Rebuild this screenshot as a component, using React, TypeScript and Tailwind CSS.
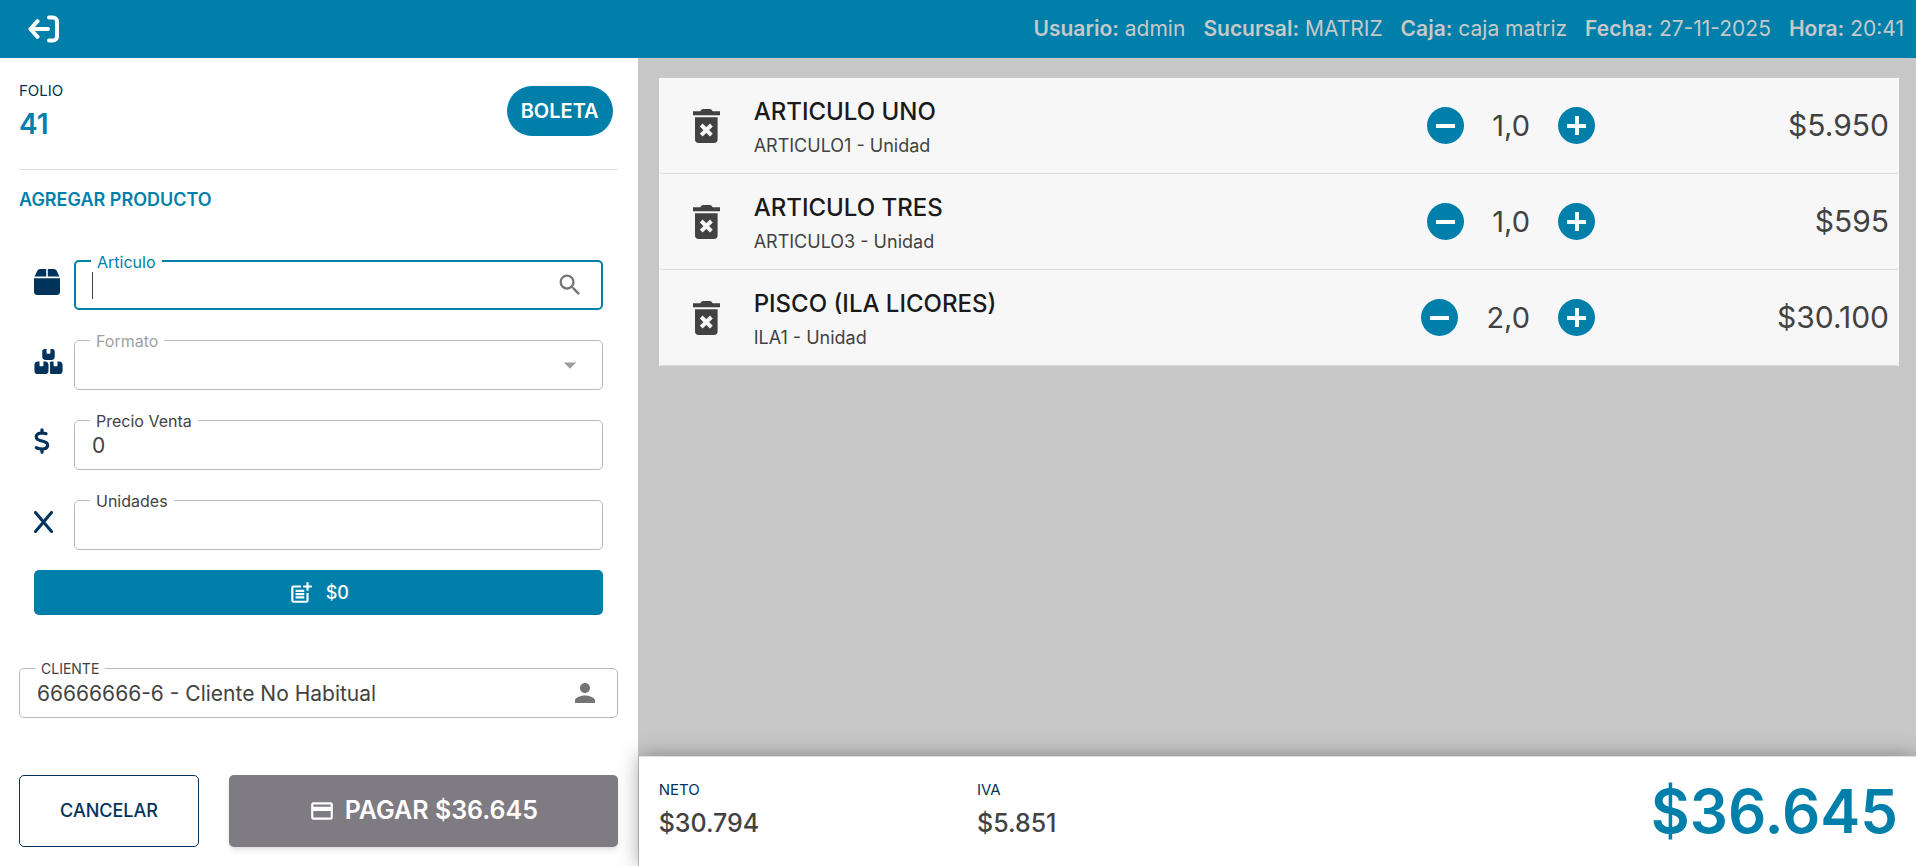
import {
  MdOutlineCreditCard,
  MdOutlinePostAdd,
  MdPerson,
  MdSearch,
  MdArrowDropDown,
} from 'react-icons/md';
import { FaBoxesStacked, FaDollarSign } from 'react-icons/fa6';

interface CartItem {
  name: string;
  code: string;
  qty: string;
  total: string;
}

const items: CartItem[] = [
  { name: 'ARTICULO UNO', code: 'ARTICULO1 - Unidad', qty: '1,0', total: '$5.950' },
  { name: 'ARTICULO TRES', code: 'ARTICULO3 - Unidad', qty: '1,0', total: '$595' },
  { name: 'PISCO (ILA LICORES)', code: 'ILA1 - Unidad', qty: '2,0', total: '$30.100' },
];

const session = [
  { label: 'Usuario:', value: 'admin' },
  { label: 'Sucursal:', value: 'MATRIZ' },
  { label: 'Caja:', value: 'caja matriz' },
  { label: 'Fecha:', value: '27-11-2025' },
  { label: 'Hora:', value: '20:41' },
];

function ExitIcon() {
  return (
    <svg viewBox="0 0 31 28" className="h-7 w-[31px]" fill="none" stroke="currentColor" strokeWidth="4" strokeLinecap="round" strokeLinejoin="round">
      <path d="M21 2.5h4a4 4 0 0 1 4 4v15a4 4 0 0 1-4 4h-4" />
      <path d="M20 14H2.500M9.500 6.200 2.500 14l7 7.800" />
    </svg>
  );
}

function BoxIcon() {
  return (
    <svg viewBox="0 0 26 26" className="h-[26px] w-[26px]" fill="currentColor">
      <path d="M12.2 0v7.600H.6L3.300 1.700A3 3 0 0 1 6 0zM13.800 0H20a3 3 0 0 1 2.700 1.700l2.700 5.900H13.800zM0 9.200h26V22.500a3.500 3.500 0 0 1-3.500 3.500h-19A3.500 3.500 0 0 1 0 22.500z" />
    </svg>
  );
}

function TimesIcon() {
  return (
    <svg viewBox="0 0 20 22" className="h-[22px] w-5" fill="none" stroke="currentColor" strokeWidth="3" strokeLinecap="round">
      <path d="M1.500 1.500l16 19M17.500 1.500l-16 19" />
    </svg>
  );
}

function TrashIcon() {
  return (
    <svg viewBox="0 0 27 34" className="h-[34px] w-[27px]">
      <path fill="currentColor" d="M0 2.200h7.500C8 .8 9 0 10.500 0h6C18 0 19 .8 19.500 2.200H27v4H0zM2 8.200h22.600v22a3.800 3.800 0 0 1-3.800 3.800h-15A3.800 3.800 0 0 1 2 30.200z" />
      <path stroke="#f7f7f7" strokeWidth="4" d="M8.200 16l10.200 10.200M18.400 16L8.200 26.200" />
    </svg>
  );
}

interface FieldProps {
  id: string;
  label: string;
  tone?: 'active' | 'disabled' | 'normal';
  small?: boolean;
  children: React.ReactNode;
}

function Field({ id, label, tone = 'normal', small = false, children }: FieldProps) {
  const border = tone === 'active' ? 'border-2 border-[#007faa]' : 'border border-[#b9b9b9]';
  const text = tone === 'active' ? 'text-[#007faa]' : tone === 'disabled' ? 'text-[#a0a0a0]' : 'text-[#424242]';
  const size = small ? 'text-sm' : 'text-base';
  return (
    <div className={`relative flex h-[50px] min-w-0 flex-1 items-center rounded-[5px] bg-white ${border}`}>
      <label htmlFor={id} className={`absolute -top-[10px] left-[15px] flex h-5 items-center bg-white px-[6px] ${size} ${text}`}>
        {label}
      </label>
      {children}
    </div>
  );
}

export default function App() {
  return (
    <div className="flex min-h-screen flex-col bg-[#c7c7c7] font-[Inter,sans-serif] text-[#424242]">
      {/* Barra superior */}
      <header className="flex h-[58px] items-center justify-between bg-[#007faa] pr-3 pl-7 text-[21px]">
        <button aria-label="Salir" className="text-white">
          <ExitIcon />
        </button>
        <div className="flex gap-[18px] text-[#c8c8c8]">
          {session.map((s) => (
            <span key={s.label}>
              <strong className="font-semibold">{s.label}</strong> {s.value}
            </span>
          ))}
        </div>
      </header>

      <div className="grid flex-1 grid-cols-3">
        {/* Panel de venta */}
        <aside className="flex flex-col border-r border-[#c7c7c7] bg-white pr-5 pb-[19px] pl-[19px]">
          <div className="flex h-[112px] items-start justify-between border-b border-[#dedede] pt-[21px] pr-[5px]">
            <div>
              <div className="text-[15px] leading-6 text-[#00335b]">FOLIO</div>
              <div className="text-[28px] leading-[42px] font-semibold text-[#007faa]">41</div>
            </div>
            <button className="mt-[7px] h-[50px] rounded-full bg-[#007faa] px-[14px] text-xl font-semibold text-white">BOLETA</button>
          </div>

          <h2 className="mt-[18px] text-[18px] leading-6 font-semibold text-[#007faa]">AGREGAR PRODUCTO</h2>

          <form className="mt-12 flex flex-col gap-[30px] px-[15px] text-[#00335b]">
            <div className="flex">
              <div className="w-10 pt-[9px]"><BoxIcon /></div>
              <Field id="articulo" label="Articulo" tone="active">
                <span className="ml-4 h-7 w-px bg-[#424242]" />
                <input id="articulo" autoFocus className="h-full min-w-0 flex-1 bg-transparent text-xl text-[#424242] caret-transparent outline-none" />
                <MdSearch className="mr-[17px] h-7 w-7 text-[#757575]" />
              </Field>
            </div>
            <div className="flex">
              <div className="w-10 pt-[9px]"><FaBoxesStacked className="h-[25px] w-[29px]" /></div>
              <Field id="formato" label="Formato" tone="disabled">
                <select id="formato" disabled className="h-full min-w-0 flex-1 appearance-none bg-transparent px-4 text-xl" />
                <MdArrowDropDown className="mr-[17px] h-[30px] w-[30px] text-[#9e9e9e]" />
              </Field>
            </div>
            <div className="flex">
              <div className="w-10 pt-2"><FaDollarSign className="h-[26px] w-4" /></div>
              <Field id="precio" label="Precio Venta">
                <input id="precio" defaultValue="0" className="h-full min-w-0 flex-1 bg-transparent px-[17px] text-[21px] text-[#424242] outline-none" />
              </Field>
            </div>
            <div className="flex">
              <div className="w-10 pt-[11px]"><TimesIcon /></div>
              <Field id="unidades" label="Unidades">
                <input id="unidades" className="h-full min-w-0 flex-1 bg-transparent px-[17px] text-[21px] text-[#424242] outline-none" />
              </Field>
            </div>
          </form>

          <button className="mx-[15px] mt-5 flex h-[45px] items-center justify-center gap-3 rounded-[5px] bg-[#007faa] text-lg font-medium text-white">
            <MdOutlinePostAdd className="h-[26px] w-[26px]" />
            $0
          </button>

          <div className="mt-[53px] flex">
            <Field id="cliente" label="CLIENTE" small>
              <input id="cliente" defaultValue="66666666-6 - Cliente No Habitual" className="h-full min-w-0 flex-1 bg-transparent px-[17px] text-[21px] outline-none" />
              <MdPerson className="mr-[17px] h-[30px] w-[30px] text-[#757575]" />
            </Field>
          </div>

          <div className="mt-auto flex gap-[30px] pt-[57px]">
            <button className="h-[72px] w-[180px] rounded-[5px] border border-[#00335b] text-lg font-medium text-[#00335b]">CANCELAR</button>
            <button className="flex h-[72px] flex-1 items-center justify-center gap-[10px] rounded-[5px] bg-[#7f7b82] text-[25px] font-semibold text-white shadow-md">
              <MdOutlineCreditCard className="h-[26px] w-[26px]" />
              PAGAR $36.645
            </button>
          </div>
        </aside>

        {/* Detalle de la venta */}
        <main className="col-span-2 flex flex-col">
          <ul className="flex-1 py-5 pr-[17px] pl-5">
            {items.map((item) => (
              <li key={item.code} className="bg-[#f7f7f7]">
                <div className="flex h-24 items-center rounded-b-[4px] border-b border-[#dadada] pr-[10px] pl-[34px]">
                  <button aria-label={`Eliminar ${item.name}`} className="text-[#424242]">
                    <TrashIcon />
                  </button>
                  <div className="ml-[34px] flex-1 pt-[3px]">
                    <div className="text-2xl font-medium text-[#1a1a1a]">{item.name}</div>
                    <div className="mt-[6px] text-[18px] leading-6">{item.code}</div>
                  </div>
                  <div className="flex items-center gap-7 text-[29px]">
                    <button aria-label="Restar" className="flex h-[37px] w-[37px] items-center justify-center rounded-full bg-[#007faa] text-white">
                      <svg viewBox="0 0 19 19" className="h-[19px] w-[19px]" fill="currentColor"><path d="M0 8h19v4H0z" /></svg>
                    </button>
                    <span>{item.qty}</span>
                    <button aria-label="Sumar" className="flex h-[37px] w-[37px] items-center justify-center rounded-full bg-[#007faa] text-white">
                      <svg viewBox="0 0 19 19" className="h-[19px] w-[19px]" fill="currentColor"><path d="M8 0h4v8h7v4h-7v7H8v-7H0V8h8z" /></svg>
                    </button>
                  </div>
                  <div className="w-[294px] text-right text-[30px]">{item.total}</div>
                </div>
              </li>
            ))}
          </ul>

          {/* Totales */}
          <footer className="flex h-[110px] border-t border-[#e0e0e0] bg-white shadow-[0_0_20px_rgba(0,0,0,0.35)]">
            <div className="w-1/4 pt-[21px] pl-5">
              <div className="text-[15px] leading-6 text-[#00335b]">NETO</div>
              <div className="text-[25px] leading-[42px] font-medium">$30.794</div>
            </div>
            <div className="w-1/4 pt-[21px] pl-[19px]">
              <div className="text-[15px] leading-6 text-[#00335b]">IVA</div>
              <div className="text-[25px] leading-[42px] font-medium">$5.851</div>
            </div>
            <div className="flex-1 pt-6 pr-[18px] text-right text-6xl font-semibold text-[#007faa]">$36.645</div>
          </footer>
        </main>
      </div>
    </div>
  );
}
